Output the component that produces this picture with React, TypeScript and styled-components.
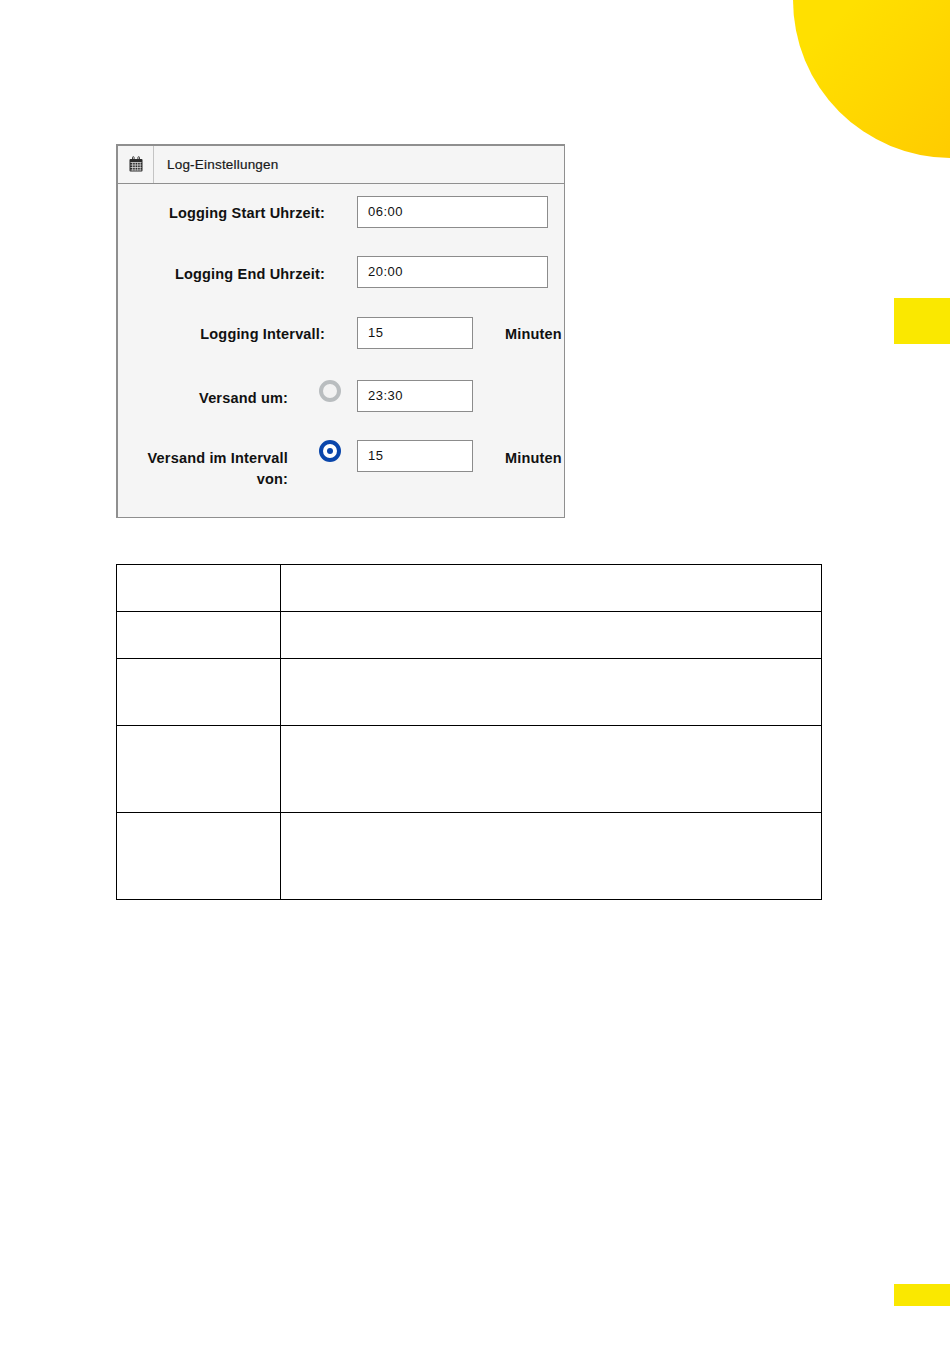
import styled, { createGlobalStyle } from 'styled-components'

const GlobalStyle = createGlobalStyle`
  html, body {
    margin: 0;
    padding: 0;
    background: #fff;
  }
  body {
    font-family: "Liberation Sans", Arial, sans-serif;
    color: #000;
  }
`

const CalendarIcon = () => (
  <svg width="14" height="16" viewBox="0 0 14 16" fill="none">
    <path d="M3.5 3V1.5a.8.8 0 0 1 1.6 0V3M8.9 3V1.5a.8.8 0 0 1 1.6 0V3" stroke="#2b2b2b" strokeWidth="0.9" />
    <rect x="0.5" y="3" width="13" height="12.5" rx="1" fill="#2b2b2b" />
    <path
      d="M1.5 6.5h11M1.5 9h11M1.5 11.5h11M1.5 14h11M3.7 6.5v8M6.2 6.5v8M8.7 6.5v8M11.2 6.5v8"
      stroke="#dcdcdc"
      strokeWidth="0.8"
    />
  </svg>
)

const App = () => {
  return (
    <Page>
      <GlobalStyle />
      <Sun />
      <SideTab />
      <FooterTab />

      <Panel>
        <PanelHeader>
          <IconCell>
            <CalendarIcon />
          </IconCell>
          <PanelTitle>Log-Einstellungen</PanelTitle>
        </PanelHeader>

        <Form>
          <Row $top={12}>
            <Label $width={207} $drop={7}>Logging Start Uhrzeit:</Label>
            <Field $gap={32} $width={191} readOnly value="06:00" />
          </Row>
          <Row $top={28}>
            <Label $width={207} $drop={8}>Logging End Uhrzeit:</Label>
            <Field $gap={32} $width={191} readOnly value="20:00" />
          </Row>
          <Row $top={29}>
            <Label $width={207} $drop={7}>Logging Intervall:</Label>
            <Field $gap={32} $width={116} readOnly value="15" />
            <Unit $drop={7}>Minuten</Unit>
          </Row>
          <Row $top={31}>
            <Label $width={170} $drop={8}>Versand um:</Label>
            <Radio />
            <Field $gap={16} $width={116} readOnly value="23:30" />
          </Row>
          <Row $top={28}>
            <Label $width={170} $drop={8}>
              Versand im Intervall
              <br />
              von:
            </Label>
            <Radio $active />
            <Field $gap={16} $width={116} readOnly value="15" />
            <Unit $drop={8}>Minuten</Unit>
          </Row>
        </Form>
      </Panel>

      <Table>
        <tbody>
          <TableRow $height={47}><KeyCell /><ValueCell /></TableRow>
          <TableRow $height={47}><KeyCell /><ValueCell /></TableRow>
          <TableRow $height={67}><KeyCell /><ValueCell /></TableRow>
          <TableRow $height={87}><KeyCell /><ValueCell /></TableRow>
          <TableRow $height={87}><KeyCell /><ValueCell /></TableRow>
        </tbody>
      </Table>
    </Page>
  )
}

export default App

const Page = styled.div`
  position: relative;
  width: 950px;
  height: 1348px;
  padding: 144px 0 0 116px;
  box-sizing: border-box;
  overflow: hidden;
  background: #fff;
`

const Sun = styled.div`
  position: absolute;
  top: -158px;
  left: 793px;
  width: 316px;
  height: 316px;
  border-radius: 50%;
  background: linear-gradient(135deg, #ffe000 35%, #ffca00 78%);
`

const SideTab = styled.div`
  position: absolute;
  top: 298px;
  left: 894px;
  width: 56px;
  height: 46px;
  background: #fae800;
`

const FooterTab = styled.div`
  position: absolute;
  top: 1284px;
  left: 894px;
  width: 56px;
  height: 22px;
  background: #fae800;
`

const Panel = styled.section`
  width: 449px;
  height: 374px;
  box-sizing: border-box;
  background: #f5f5f5;
  border-style: solid;
  border-color: #8f8f8f;
  border-width: 2px 1px 1px 2px;
`

const PanelHeader = styled.header`
  display: flex;
  align-items: stretch;
  height: 37px;
  border-bottom: 1px solid #8f8f8f;
`

const IconCell = styled.div`
  flex: none;
  display: flex;
  align-items: center;
  justify-content: center;
  width: 36px;
  padding-bottom: 1px;
  box-sizing: border-box;
  border-right: 1px solid #c4c4c4;
`

const PanelTitle = styled.h2`
  margin: 0 0 0 13px;
  font-size: 13.5px;
  font-weight: 400;
  line-height: 37px;
  letter-spacing: 0.2px;
  color: #1a1a1a;
  -webkit-text-stroke: 0.2px #1a1a1a;
`

const Form = styled.div`
  display: flex;
  flex-direction: column;
`

const Row = styled.div<{ $top: number }>`
  display: flex;
  align-items: flex-start;
  margin-top: ${(p) => p.$top}px;
`

const Label = styled.label<{ $width: number; $drop: number }>`
  flex: none;
  width: ${(p) => p.$width}px;
  padding-top: ${(p) => p.$drop}px;
  font-size: 14.5px;
  font-weight: 700;
  line-height: 21px;
  letter-spacing: 0.17px;
  text-align: right;
  color: #111;
`

const Radio = styled.span<{ $active?: boolean }>`
  flex: none;
  box-sizing: border-box;
  display: flex;
  align-items: center;
  justify-content: center;
  width: 22px;
  height: 22px;
  margin-left: 31px;
  border-radius: 50%;
  border: 4px solid ${(p) => (p.$active ? '#0a46ab' : '#b9bdbf')};
  background: ${(p) => (p.$active ? '#fff' : '#f2f2f2')};

  &::after {
    content: '';
    display: ${(p) => (p.$active ? 'block' : 'none')};
    width: 6px;
    height: 6px;
    border-radius: 50%;
    background: #0a46ab;
  }
`

const Field = styled.input<{ $gap: number; $width: number }>`
  flex: none;
  box-sizing: border-box;
  width: ${(p) => p.$width}px;
  height: 32px;
  margin: 0 0 0 ${(p) => p.$gap}px;
  padding: 0 10px 2px;
  border: 1px solid #8c8c8c;
  border-radius: 0;
  outline: none;
  background: #fff;
  font-family: "Liberation Sans", Arial, sans-serif;
  font-size: 13px;
  letter-spacing: 0.5px;
  color: #111;
`

const Unit = styled.span<{ $drop: number }>`
  margin-left: 32px;
  padding-top: ${(p) => p.$drop}px;
  font-size: 14.5px;
  font-weight: 700;
  line-height: 21px;
  letter-spacing: 0.17px;
  color: #111;
`

const Table = styled.table`
  width: 706px;
  margin-top: 46px;
  border-collapse: collapse;
  table-layout: fixed;
`

const TableRow = styled.tr<{ $height: number }>`
  height: ${(p) => p.$height}px;
`

const KeyCell = styled.td`
  width: 163px;
  padding: 0;
  border: 1px solid #000;
`

const ValueCell = styled.td`
  padding: 0;
  border: 1px solid #000;
`
